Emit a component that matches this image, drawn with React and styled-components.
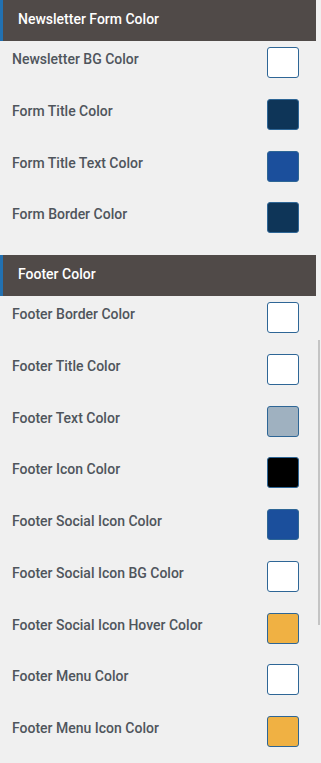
import React from 'react';
import styled, { createGlobalStyle } from 'styled-components';

const GlobalStyle = createGlobalStyle`
  html, body {
    margin: 0;
    padding: 0;
    background: #f0f0f0;
  }
  body {
    font-family: Roboto, "Liberation Sans", Arial, sans-serif;
  }
`;

const sections = [
  {
    title: 'Newsletter Form Color',
    items: [
      { label: 'Newsletter BG Color', color: '#ffffff' },
      { label: 'Form Title Color', color: '#0e3558' },
      { label: 'Form Title Text Color', color: '#1b4f9c' },
      { label: 'Form Border Color', color: '#0e3558' },
    ],
  },
  {
    title: 'Footer Color',
    items: [
      { label: 'Footer Border Color', color: '#ffffff' },
      { label: 'Footer Title Color', color: '#ffffff' },
      { label: 'Footer Text Color', color: '#9fb1c0' },
      { label: 'Footer Icon Color', color: '#000000' },
      { label: 'Footer Social Icon Color', color: '#1b4f9c' },
      { label: 'Footer Social Icon BG Color', color: '#ffffff' },
      { label: 'Footer Social Icon Hover Color', color: '#f0b143' },
      { label: 'Footer Menu Color', color: '#ffffff' },
      { label: 'Footer Menu Icon Color', color: '#f0b143' },
    ],
  },
];

function App() {
  return (
    <>
      <GlobalStyle />
      <Panel>
        {sections.map((section, k) => (
          <Section key={k}>
            <Header>{section.title}</Header>
            {section.items.map((item, i) => (
              <Row key={i}>
                <Label>{item.label}</Label>
                <Swatch $color={item.color} />
              </Row>
            ))}
          </Section>
        ))}
        <ScrollThumb />
      </Panel>
    </>
  );
}

const Panel = styled.div`
  position: relative;
  width: 321px;
  height: 763px;
  overflow: hidden;
  background: #f0f0f0;
  display: flex;
  flex-direction: column;
  gap: 7px;
`;

const Section = styled.div`
  display: flex;
  flex-direction: column;
`;

const Header = styled.div`
  width: 316px;
  height: 41px;
  box-sizing: border-box;
  background: #504a48;
  border-left: 3px solid #2271b1;
  padding-left: 15px;
  display: flex;
  align-items: center;
  color: #ffffff;
  font-size: 14px;
  font-weight: 500;
  padding-bottom: 4px;
`;

const Row = styled.div`
  height: 51.75px;
  box-sizing: border-box;
  display: flex;
  align-items: flex-start;
  justify-content: space-between;
  padding: 6px 22px 0 12px;
`;

const Label = styled.div`
  padding-top: 3px;
  line-height: 18px;
  font-size: 14px;
  font-weight: 500;
  color: #4f555c;
`;

const Swatch = styled.div`
  width: 32px;
  height: 31px;
  box-sizing: border-box;
  border: 1px solid #2e6696;
  border-radius: 3px;
  background: ${p => p.$color};
`;

const ScrollThumb = styled.div`
  position: absolute;
  right: 1px;
  top: 340px;
  width: 2px;
  height: 285px;
  background: #c4c4c4;
`;

export default App;
